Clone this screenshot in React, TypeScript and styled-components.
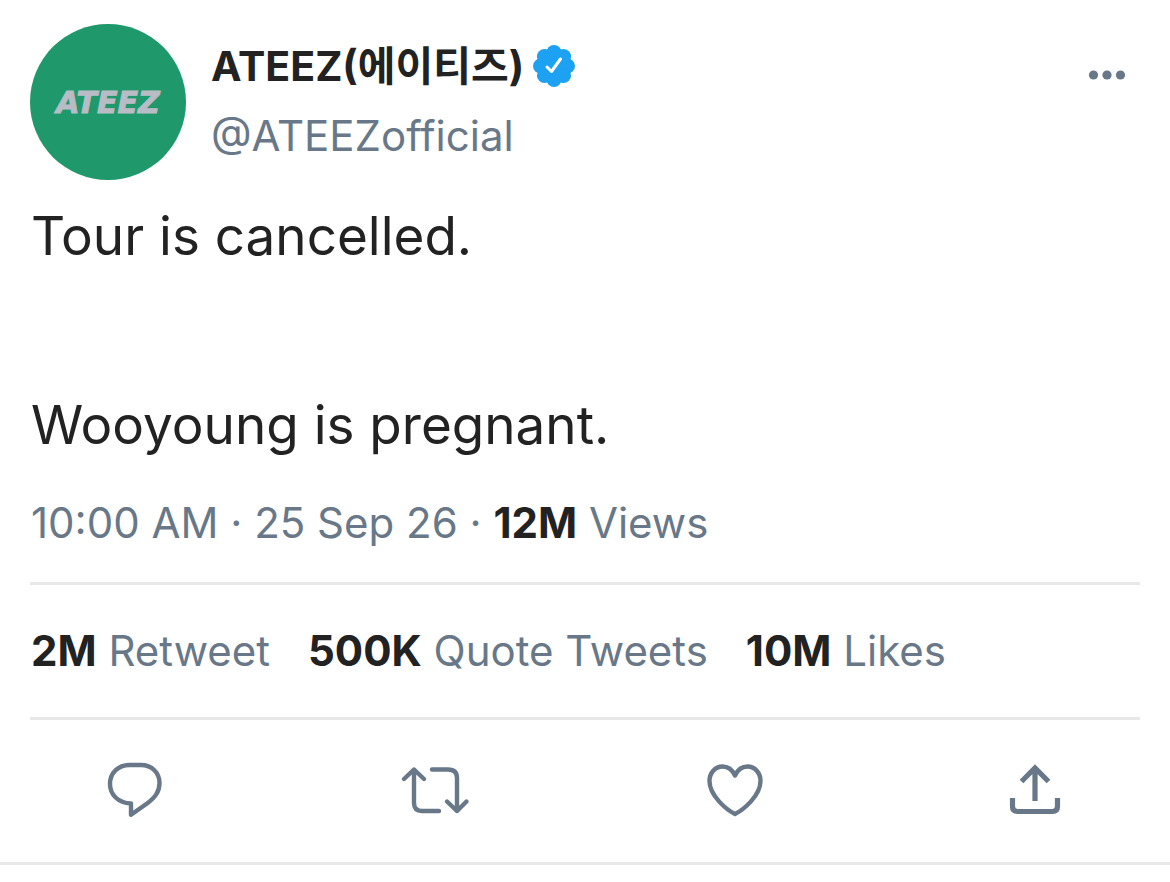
import React from "react";
import styled, { createGlobalStyle } from "styled-components";

const GlobalStyle = createGlobalStyle`
  * { box-sizing: border-box; }
  body {
    margin: 0;
    background: #ffffff;
    color: #222222;
    font-family: Inter, "Noto Sans CJK KR", sans-serif;
    font-size: 42px;
    line-height: 48px;
  }
`;

const Tweet = styled.article`
  padding: 24px 30px 0;
  border-bottom: 3px solid #e8e8e8;
`;

const Header = styled.header`
  display: flex;
  gap: 25px;
`;

const Avatar = styled.svg`
  flex: none;
  width: 156px;
  height: 156px;
  border-radius: 50%;
  background: #1f996b;
`;

const LogoText = styled.text`
  font-family: "DejaVu Sans", sans-serif;
  font-size: 30px;
  font-weight: 700;
  font-style: italic;
  fill: #b9bcc4;
  stroke: #b9bcc4;
  stroke-width: 1px;
`;

const Author = styled.div`
  flex: 1;
  padding-top: 18px;
`;

const NameRow = styled.div`
  display: flex;
  align-items: center;
  gap: 8px;
  margin-bottom: 22px;
`;

const Name = styled.h1`
  margin: 0;
  font-size: 41px;
  line-height: 48px;
  font-weight: 700;
`;

const Badge = styled.svg`
  width: 44px;
  height: 44px;
`;

const Handle = styled.a`
  display: block;
  color: #687888;
  text-decoration: none;
`;

const IconButton = styled.button`
  display: flex;
  align-items: center;
  justify-content: center;
  height: 60px;
  width: 60px;
  padding: 0;
  border: 0;
  background: none;
  color: #687888;
  cursor: pointer;
`;

const MoreButton = styled(IconButton)`
  margin: 21px 3px 0 0;
`;

const Body = styled.p`
  margin: 25px 0 0;
  padding-left: 1px;
  font-size: 53px;
  line-height: 63px;
  white-space: pre-wrap;
`;

const Meta = styled.div`
  padding: 42px 1px 35px;
  color: #687888;
  border-bottom: 3px solid #e8e8e8;
`;

const Strong = styled.strong`
  color: #222222;
  font-weight: 700;
`;

const Stats = styled.div`
  display: flex;
  flex-wrap: wrap;
  gap: 38px;
  padding: 42px 1px;
  border-bottom: 3px solid #e8e8e8;
`;

const Stat = styled.a`
  color: #687888;
  text-decoration: none;
`;

const Actions = styled.div`
  display: flex;
  justify-content: space-between;
  padding: 40px 75px 42px;
`;

const Icon = styled.svg`
  width: 72px;
  height: 60px;
  flex: none;
  fill: none;
  stroke: currentColor;
  stroke-width: 4.4;
  stroke-linecap: round;
  stroke-linejoin: round;
`;

const petals = Array.from({ length: 8 }, (_, i) => (i * Math.PI) / 4);

export default function App() {
  return (
    <>
      <GlobalStyle />
      <Tweet>
        <Header>
          <Avatar viewBox="0 0 156 156" role="img" aria-label="ATEEZ">
            <LogoText x="78" y="89" textAnchor="middle">ATEEZ</LogoText>
          </Avatar>
          <Author>
            <NameRow>
              <Name>ATEEZ(에이티즈)</Name>
              <Badge viewBox="0 0 44 44" role="img" aria-label="Verified">
                <g fill="#1da1f2">
                  <circle cx="22" cy="22" r="17.5" />
                  {petals.map((a) => (
                    <circle key={a} cx={22 + 13.4 * Math.cos(a)} cy={22 + 13.4 * Math.sin(a)} r="7.6" />
                  ))}
                </g>
                <path
                  d="M15 23L19.500 27.500L28.500 15"
                  fill="none"
                  stroke="#fff"
                  strokeWidth="3"
                  strokeLinecap="round"
                  strokeLinejoin="round"
                />
              </Badge>
            </NameRow>
            <Handle href="#profile">@ATEEZofficial</Handle>
          </Author>
          <MoreButton aria-label="More">
            <svg width="60" height="60" viewBox="0 0 60 60" fill="currentColor">
              <circle cx="16.500" cy="30" r="4.600" />
              <circle cx="30" cy="30" r="4.600" />
              <circle cx="43.500" cy="30" r="4.600" />
            </svg>
          </MoreButton>
        </Header>
        <Body>{"Tour is cancelled.\n\n\nWooyoung is pregnant."}</Body>
        <Meta>
          10:00 AM · 25 Sep 26 · <Strong>12M</Strong> Views
        </Meta>
        <Stats>
          <Stat href="#retweets"><Strong>2M</Strong> Retweet</Stat>
          <Stat href="#quotes"><Strong>500K</Strong> Quote Tweets</Stat>
          <Stat href="#likes"><Strong>10M</Strong> Likes</Stat>
        </Stats>
        <Actions>
          <IconButton aria-label="Reply">
            <Icon viewBox="0 0 72 60">
              <path d="M30.500 5H42C53 5 60.500 13 60.500 23C60.500 32 56 37.500 48 43.500L32 54.800V43.500C19 43 11 34.500 11 24C11 13 19 5 30.500 5Z" />
            </Icon>
          </IconButton>
          <IconButton aria-label="Retweet">
            <Icon viewBox="0 0 72 60">
              <path d="M5 19L15 9.500L25 19M15 10V43Q15 51 23 51H40M33 9.500H49Q58 9.500 58 18V51M48 41.500L58 51L67.500 41.500" />
            </Icon>
          </IconButton>
          <IconButton aria-label="Like">
            <Icon viewBox="0 0 72 60">
              <path d="M36 15.500C39 9 44 6.500 48.500 6.500C56 6.500 61.500 13 61.500 21C61.500 36 44 50 36 54C28 50 10.500 36 10.500 21C10.500 13 16 6.500 23.500 6.500C28 6.500 33 9 36 15.500Z" />
            </Icon>
          </IconButton>
          <IconButton aria-label="Share">
            <Icon viewBox="0 0 72 60">
              <g strokeWidth="5.200" strokeLinecap="butt" strokeLinejoin="miter">
                <path d="M36 41V8M22.500 21.500L36 8L49.500 21.500" />
                <path d="M13.500 38V46.500Q13.500 51.500 18.500 51.500H53.500Q58.500 51.500 58.500 46.500V38" />
              </g>
            </Icon>
          </IconButton>
        </Actions>
      </Tweet>
    </>
  );
}
